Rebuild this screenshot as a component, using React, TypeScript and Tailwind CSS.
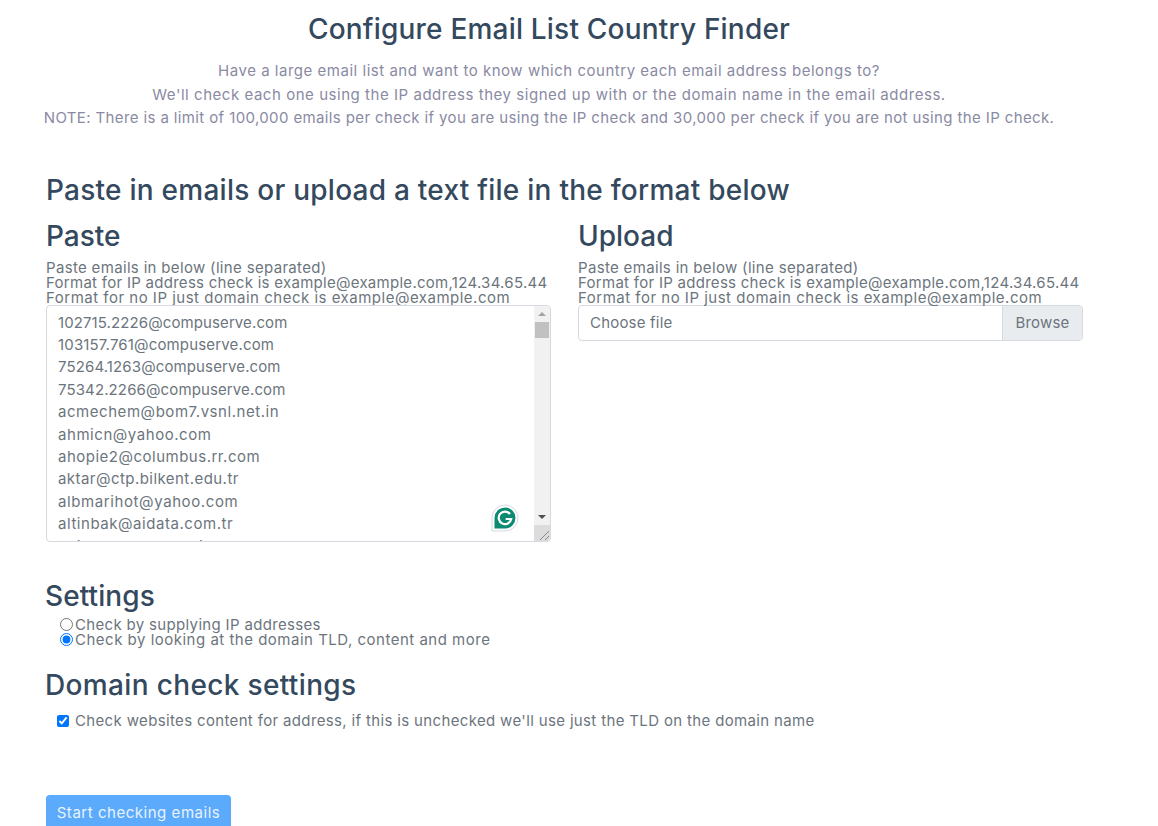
const emails = [
  { text: '102715.2226@compuserve.com', spacing: 'tracking-[0.1px]' },
  { text: '103157.761@compuserve.com', spacing: 'tracking-[0.16px]' },
  { text: '75264.1263@compuserve.com', spacing: 'tracking-[0.12px]' },
  { text: '75342.2266@compuserve.com', spacing: 'tracking-[0.12px]' },
  { text: 'acmechem@bom7.vsnl.net.in', spacing: 'tracking-[0.55px]' },
  { text: 'ahmicn@yahoo.com', spacing: 'tracking-[0.55px]' },
  { text: 'ahopie2@columbus.rr.com', spacing: 'tracking-[0.5px]' },
  { text: 'aktar@ctp.bilkent.edu.tr', spacing: 'tracking-[0.45px]' },
  { text: 'albmarihot@yahoo.com', spacing: 'tracking-[0.6px]' },
  { text: 'altinbak@aidata.com.tr', spacing: 'tracking-[0.55px]' },
  { text: 'altinbak@superonline.com', spacing: 'tracking-[0.55px]' },
];

const FormatHelp = () => (
  <div className="text-[15px] leading-[15px] text-[#6c757d] whitespace-nowrap">
    <div className="tracking-[0.33px]">Paste emails in below (line separated)</div>
    <div className="tracking-[0.28px]">Format for IP address check is example@example.com,124.34.65.44</div>
    <div className="tracking-[0.5px]">Format for no IP just domain check is example@example.com</div>
  </div>
);

const App = () => {
  return (
    <main className="h-[826px] w-[1158px] overflow-hidden bg-white font-['Inter',sans-serif] text-[#6c757d]">
      <div className="w-[1098px] pt-[12px]">
        <h1 className="text-center text-[28px] leading-[34px] font-medium tracking-[0.2px] text-[#34495e]">
          Configure Email List Country Finder
        </h1>
        <div className="mt-[13px] text-center text-[15px] leading-[23.5px] text-[#8a8aa3]">
          <p className="tracking-[0.52px]">Have a large email list and want to know which country each email address belongs to?</p>
          <p className="tracking-[0.54px]">We'll check each one using the IP address they signed up with or the domain name in the email address.</p>
          <p className="tracking-[0.38px]">NOTE: There is a limit of 100,000 emails per check if you are using the IP check and 30,000 per check if you are not using the IP check.</p>
        </div>
      </div>

      <section className="mt-[43px] pl-[46px]">
        <h2 className="text-[28px] leading-[34px] font-medium tracking-[0.25px] text-[#34495e]">
          Paste in emails or upload a text file in the format below
        </h2>
        <div className="mt-[12px] flex gap-[27px]">
          <div className="w-[505px]">
            <h3 className="text-[28px] leading-[34px] font-medium text-[#34495e]">Paste</h3>
            <div className="mt-[7px]">
              <FormatHelp />
            </div>
            <div className="relative h-[237px] w-[505px] overflow-hidden rounded-[4px] border border-[#d5dae0] bg-white">
              <div className="pt-[6px] pl-[11px] text-[15px] leading-[22.4px] text-[#6c757d]">
                {emails.map((email) => (
                  <div key={email.text} className={email.spacing}>{email.text}</div>
                ))}
              </div>
              {/* scrollbar */}
              <div className="absolute top-0 right-0 bottom-0 flex w-[16px] flex-col items-center bg-[#f1f1f1]">
                <svg width="16" height="16" viewBox="0 0 16 16" className="shrink-0">
                  <path d="M8 6l4 4H4z" fill="#a3a3a3" />
                </svg>
                <div className="h-[16px] w-[14px] bg-[#c1c1c1]" />
                <div className="flex-1" />
                <svg width="16" height="16" viewBox="0 0 16 16" className="shrink-0">
                  <path d="M4 6h8l-4 4z" fill="#505050" />
                </svg>
                <div className="relative h-[16px] w-full bg-[#dcdcdc]">
                  <svg width="16" height="16" viewBox="0 0 16 16" className="absolute inset-0">
                    <path d="M6 15l9-9M11 15l4-4" stroke="#8a8a8a" strokeWidth="1" />
                  </svg>
                </div>
              </div>
              {/* grammarly badge */}
              <svg width="28" height="28" viewBox="0 0 28 28" className="absolute top-[198px] left-[444px]">
                <path d="M14 1a13 13 0 0 1 0 26H1V14A13 13 0 0 1 14 1z" fill="#fff" stroke="#d5d9e6" />
                <path d="M14 3.5a10.5 10.5 0 0 1 0 21H3.5V14A10.5 10.5 0 0 1 14 3.5z" fill="#0d8a72" />
                <path d="M19 10a6.3 6.3 0 1 0 1.2 5h-5.6" fill="none" stroke="#fff" strokeWidth="2.2" />
              </svg>
            </div>
          </div>

          <div className="w-[505px]">
            <h3 className="text-[28px] leading-[34px] font-medium text-[#34495e]">Upload</h3>
            <div className="mt-[7px]">
              <FormatHelp />
            </div>
            <div className="flex h-[36px] w-[505px] overflow-hidden rounded-[4px] border border-[#d5dae0] text-[15px] tracking-[0.2px]">
              <div className="flex flex-1 items-center pt-px pl-[11px] text-[#6c757d]">Choose file</div>
              <div className="flex w-[80px] items-center justify-center border-l border-[#d5dae0] bg-[#e9ecef] pt-px text-[#6c757d]">
                Browse
              </div>
            </div>
          </div>
        </div>
      </section>

      <section className="mt-[37px] pl-[46px]">
        <h3 className="-ml-px text-[28px] leading-[34px] font-medium tracking-[0.1px] text-[#34495e]">Settings</h3>
        <div className="mt-[4px] pl-[14px] text-[15px] leading-[15px]">
          <label className="flex items-center gap-[2px] tracking-[0.33px]">
            <input type="radio" name="mode" className="m-0 h-[13px] w-[13px]" />
            Check by supplying IP addresses
          </label>
          <label className="flex items-center gap-[2px] tracking-[0.5px]">
            <input type="radio" name="mode" defaultChecked className="m-0 h-[13px] w-[13px]" />
            Check by looking at the domain TLD, content and more
          </label>
        </div>
        <h3 className="mt-[21px] -ml-px text-[28px] leading-[34px] font-medium tracking-[0.35px] text-[#34495e]">Domain check settings</h3>
        <label className="mt-[8px] flex items-center gap-[6px] pl-[11px] text-[15px] leading-[22px] tracking-[0.35px]">
          <input type="checkbox" defaultChecked className="m-0 h-[12px] w-[12px]" />
          Check websites content for address, if this is unchecked we'll use just the TLD on the domain name
        </label>
        <button className="mt-[63px] h-[36px] w-[185px] rounded-[4px] bg-[#5caafc] pt-px text-[15px] tracking-[0.53px] text-[#e8f3ff]">
          Start checking emails
        </button>
      </section>
    </main>
  );
};

export default App;
